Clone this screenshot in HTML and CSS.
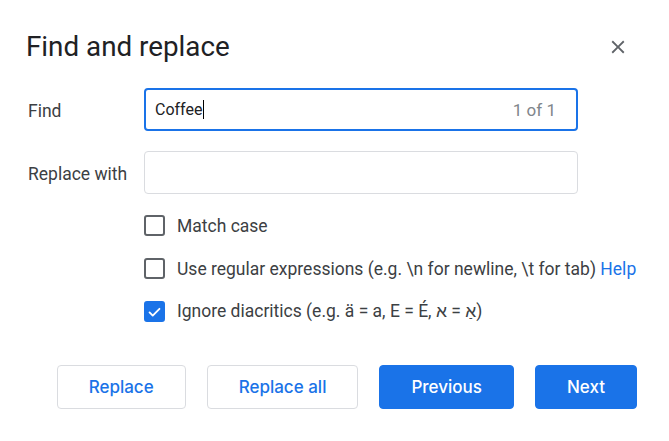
FILE: index.html
```html
<!DOCTYPE html>
<html lang="en">
<head>
<meta charset="utf-8">
<title>Find and replace</title>
<link rel="stylesheet" href="styles.css">
</head>
<body>
<div class="dialog">
  <div class="header">
    <h1 class="title">Find and replace</h1>
    <button class="close" aria-label="Close">
      <svg viewBox="0 0 24 24" width="22" height="22"><path d="M19 6.41L17.59 5 12 10.59 6.41 5 5 6.41 10.59 12 5 17.59 6.41 19 12 13.41 17.59 19 19 17.59 13.41 12z" fill="#5f6368"/></svg>
    </button>
  </div>
  <div class="form">
    <label class="label">Find</label>
    <div class="field field-active">
      <span class="value">Coffee</span><span class="caret"></span>
      <span class="count">1 of 1</span>
    </div>
    <label class="label">Replace with</label>
    <div class="field"></div>
  </div>
  <div class="options">
    <div class="option">
      <span class="box"></span>
      <span class="opt-text">Match case</span>
    </div>
    <div class="option">
      <span class="box"></span>
      <span class="opt-text">Use regular expressions (e.g. \n for newline, \t for tab) <a class="help">Help</a></span>
    </div>
    <div class="option">
      <span class="box box-checked">
        <svg viewBox="0 0 24 24" width="18" height="18"><path d="M5 12.5l4.5 4.5L19 7.5" fill="none" stroke="#fff" stroke-width="2.6" stroke-linecap="round" stroke-linejoin="round"/></svg>
      </span>
      <span class="opt-text">Ignore diacritics (e.g. ä = a, E = É, <bdi>א</bdi> = <bdi>אַ</bdi>)</span>
    </div>
  </div>
  <div class="actions">
    <button class="btn btn-outline">Replace</button>
    <button class="btn btn-outline">Replace all</button>
    <button class="btn btn-primary">Previous</button>
    <button class="btn btn-primary">Next</button>
  </div>
</div>
</body>
</html>
```
FILE: styles.css
```css
* { box-sizing: border-box; }
html, body {
  margin: 0;
  padding: 0;
  background: #ffffff;
}
body {
  font-family: Roboto, "Liberation Sans", "DejaVu Sans", sans-serif;
  color: #3c4043;
  width: 669px;
  height: 441px;
  overflow: hidden;
}
.dialog {
  padding: 31px 32px 0 26px;
}
.header {
  display: flex;
  align-items: center;
  justify-content: space-between;
  height: 32px;
}
.title {
  margin: 0;
  font-size: 27.8px;
  font-weight: 400;
  color: #202124;
  line-height: 32px;
}
.close {
  border: 0;
  background: none;
  padding: 0;
  width: 24px;
  height: 24px;
  display: flex;
  align-items: center;
  justify-content: center;
  margin-right: 7px;
  margin-top: -1px;
}
.form {
  display: grid;
  grid-template-columns: 116px 434px;
  row-gap: 20px;
  align-items: center;
  margin-top: 25px;
  padding-left: 2px;
}
.label {
  font-size: 17.5px;
  color: #3c4043;
  margin-top: 3px;
}
.field {
  height: 43px;
  border: 1px solid #dadce0;
  border-radius: 4px;
  display: flex;
  align-items: center;
  padding: 0 20px 0 10px;
  font-size: 16px;
  color: #202124;
}
.field-active {
  border: 2px solid #1a73e8;
  padding-left: 9px;
}
.caret {
  display: inline-block;
  width: 1px;
  height: 19px;
  background: #000;
  margin-left: 1px;
}
.count {
  margin-left: auto;
  color: #80868b;
  font-size: 17px;
}
.options {
  margin-top: 10px;
  padding-left: 118px;
}
.option {
  display: flex;
  align-items: center;
  height: 43px;
}
.box {
  width: 21px;
  height: 21px;
  border: 2px solid #5f6368;
  border-radius: 3px;
  margin-right: 12px;
  display: flex;
  align-items: center;
  justify-content: center;
  flex: none;
}
.box-checked {
  background: #1a73e8;
  border-color: #1a73e8;
}
.opt-text {
  font-size: 17.5px;
  color: #3c4043;
  white-space: nowrap;
}
.help {
  color: #1a73e8;
  text-decoration: none;
}
.actions {
  display: flex;
  justify-content: flex-end;
  gap: 21px;
  margin-top: 32px;
}
.btn {
  height: 44px;
  padding: 0 31px;
  border-radius: 4px;
  font-family: Inter, Roboto, "Liberation Sans", sans-serif;
  font-size: 17px;
  font-weight: 500;
  cursor: pointer;
}
.btn-outline {
  background: #fff;
  color: #1a73e8;
  border: 1px solid #dadce0;
}
.btn-primary {
  background: #1a73e8;
  color: #fff;
  border: 1px solid #1a73e8;
}
```
